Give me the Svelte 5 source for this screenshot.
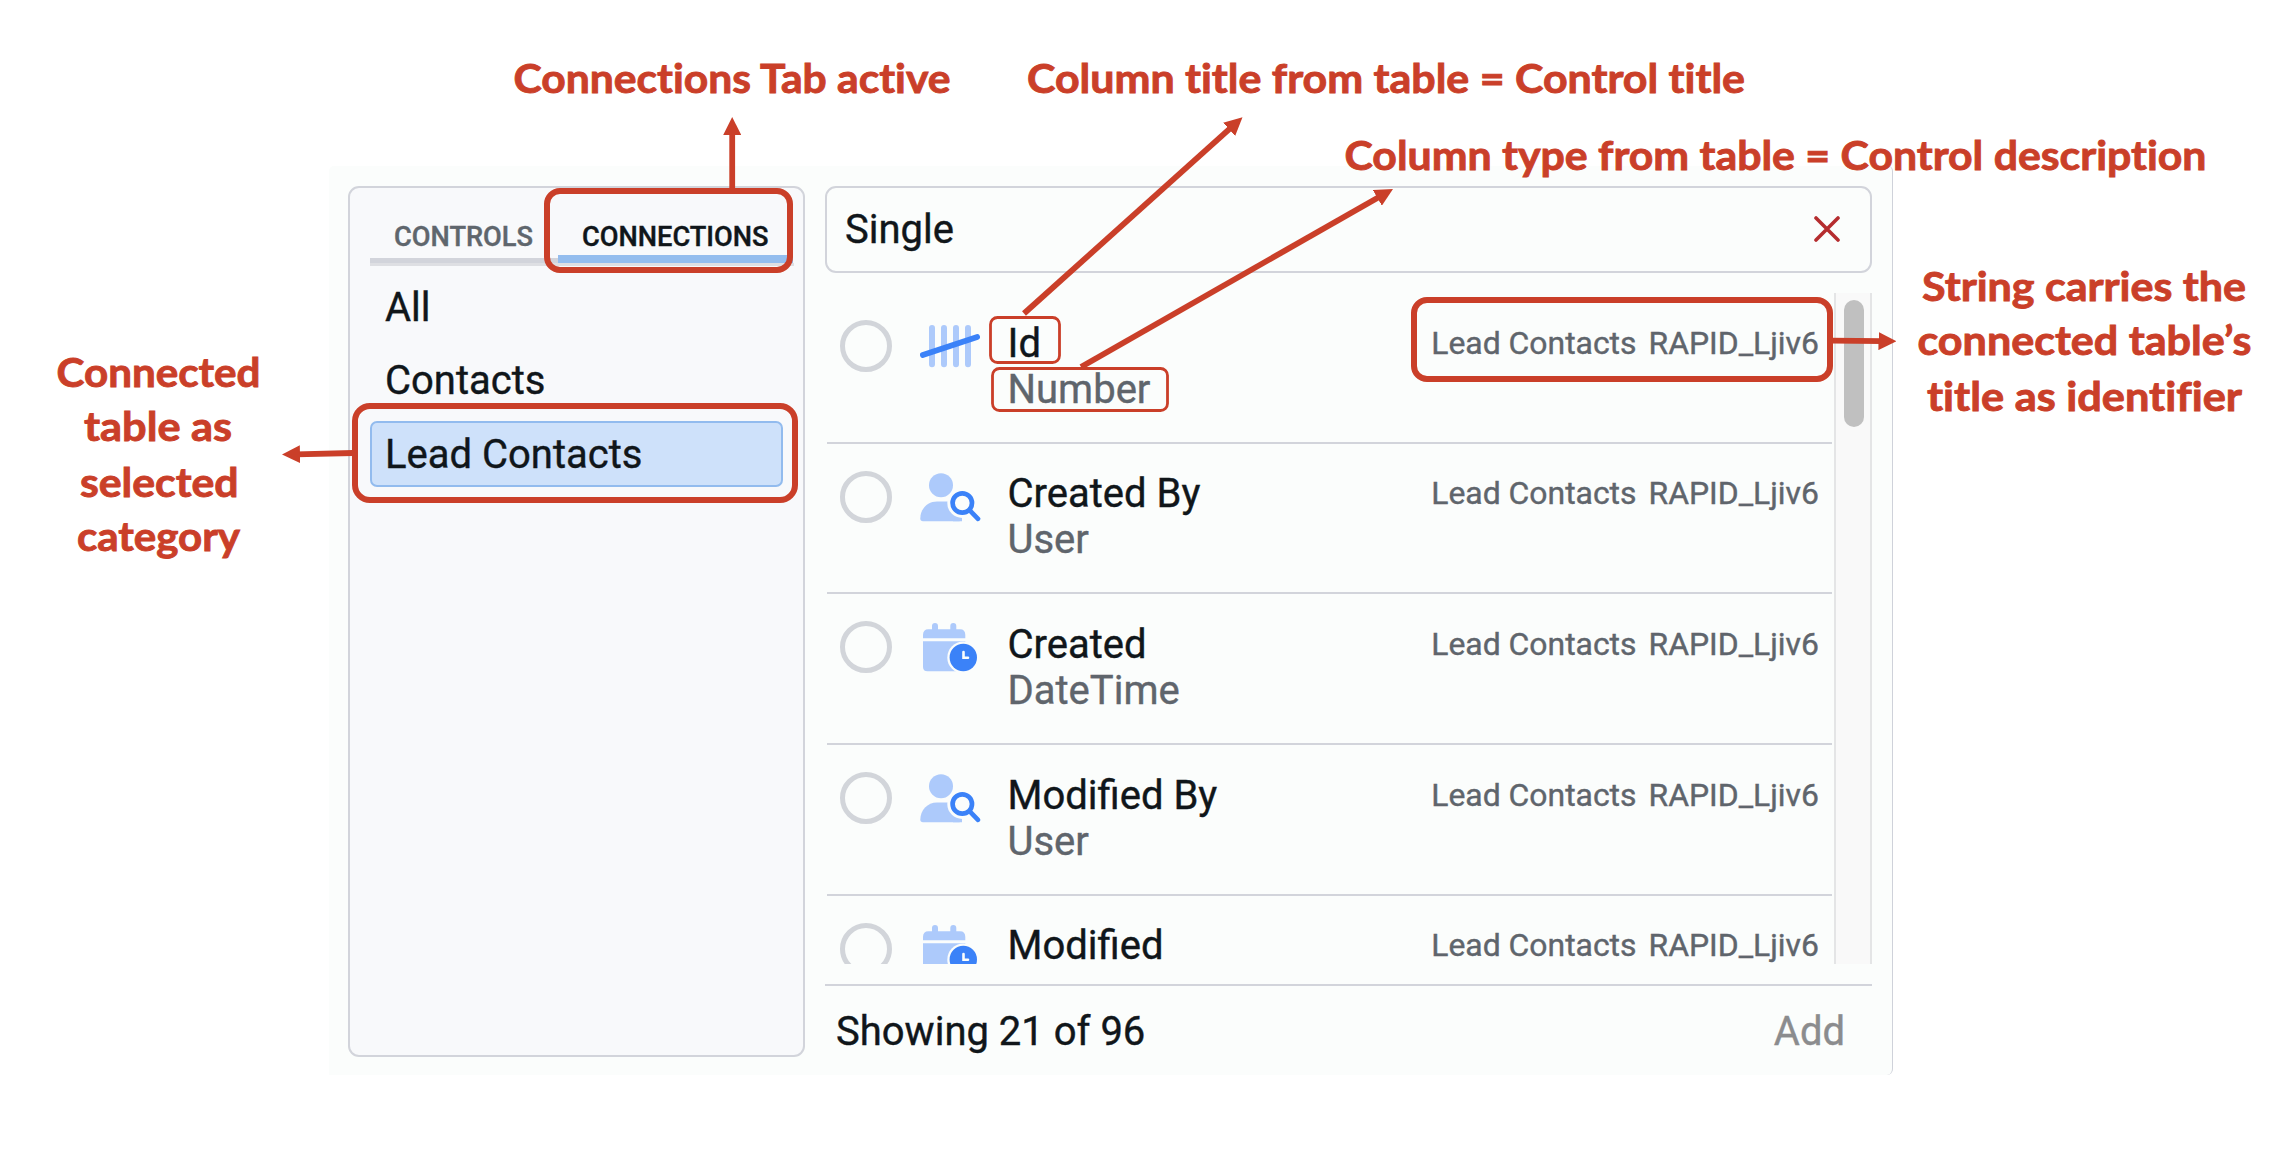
<script>
  const categories = ['All', 'Contacts', 'Lead Contacts'];
  const selected = 'Lead Contacts';

  const rows = [
    { title: 'Id', type: 'Number', icon: 'tally' },
    { title: 'Created By', type: 'User', icon: 'user' },
    { title: 'Created', type: 'DateTime', icon: 'date' },
    { title: 'Modified By', type: 'User', icon: 'user' },
    { title: 'Modified', type: '', icon: 'date' }
  ];

  // Callout labels: left edge, baseline and rendered width
  const labels = [
    { text: 'Connections Tab active', x: 513.5, y: 92.5, w: 437 },
    { text: 'Column title from table = Control title', x: 1027, y: 92.5, w: 718 },
    { text: 'Column type from table = Control description', x: 1344.5, y: 169.5, w: 862 },
    { text: 'Connected', x: 56.5, y: 387, w: 204 },
    { text: 'table as', x: 84, y: 441, w: 148 },
    { text: 'selected', x: 80, y: 496.5, w: 158.5 },
    { text: 'category', x: 77, y: 551, w: 163 },
    { text: 'String carries the', x: 1922, y: 301, w: 324 },
    { text: 'connected table’s', x: 1917.5, y: 355, w: 334 },
    { text: 'title as identifier', x: 1927, y: 411, w: 315 }
  ];

  const boxes = [
    { x: 547, y: 191, w: 243, h: 79, r: 13, s: 6 },
    { x: 355, y: 406, w: 440, h: 94, r: 15, s: 6 },
    { x: 1414, y: 300, w: 416, h: 79, r: 13, s: 6 },
    { x: 990.5, y: 317.5, w: 69, h: 45, r: 7, s: 2.8 },
    { x: 992.5, y: 368.5, w: 175, h: 42, r: 7, s: 2.8 }
  ];

  const arrows = [
    [732.2, 190, 732.2, 117],
    [1024, 313.5, 1242.5, 117.3],
    [1081, 367, 1393, 189],
    [353, 453, 282, 454.6],
    [1832, 340.6, 1896.5, 341.3]
  ];
</script>

<main>
  <div class="window">
    <aside>
      <nav>
        <span class="tab">CONTROLS</span>
        <span class="tab active">CONNECTIONS</span>
      </nav>
      <ul>
        {#each categories as c}
          <li class:selected={c === selected}>{c}</li>
        {/each}
      </ul>
    </aside>

    <section>
      <div class="search">
        <span>Single</span>
        <svg width="26" height="26" viewBox="0 0 26 26">
          <path d="M2 2L24 24M24 2L2 24" stroke="#b52d2f" stroke-width="3.6" stroke-linecap="round" />
        </svg>
      </div>

      <div class="results">
        <div class="list">
          {#each rows as row}
            <div class="row">
              <span class="radio"></span>
              <svg class="icon" width="60" height="50" viewBox="0 0 60 50">
                {#if row.icon === 'tally'}
                  <path d="M12 5V41.3M24 5V41.3M36 5V41.3M48 5V41.3" stroke="#adcafb" stroke-width="6" stroke-linecap="round" />
                  <path d="M2.8 32L57.2 14" stroke="#3b82f8" stroke-width="5.6" stroke-linecap="round" />
                {:else if row.icon === 'user'}
                  <circle cx="21" cy="11.2" r="12" fill="#adcafb" />
                  <path d="M0.3 44.500C0.300 35 7.500 27.400 17 27.400H38L42 44V47.200H3Q0.300 47.200 0.300 44.500Z" fill="#adcafb" />
                  <circle cx="42.300" cy="29" r="15" fill="#fbfdfc" />
                  <path d="M37 45.200Q40 45 42 44.500Q42 47.200 39 47.200H33V44Z" fill="#adcafb" />
                  <circle cx="42.300" cy="29" r="9.700" fill="none" stroke="#3b82f8" stroke-width="4.700" />
                  <path d="M49.500 36.200L58 44.800" stroke="#3b82f8" stroke-width="4.700" stroke-linecap="round" />
                {:else}
                  <path d="M3 14.200V11Q3 5.200 8.500 5.200H12V2A3 3 0 0 1 18 2V5.200H30.300V2A3 3 0 0 1 36.300 2V5.200H40Q45.300 5.200 45.300 11V14.200ZM3 17.200H45.300V47.200H7.500Q3 47.200 3 43Z" fill="#adcafb" />
                  <circle cx="43.300" cy="33.500" r="16" fill="#fbfdfc" />
                  <circle cx="43.300" cy="33.500" r="13.700" fill="#3b82f8" />
                  <path d="M43.500 28V33.700H48" fill="none" stroke="#fbfdfc" stroke-width="2.600" stroke-linecap="round" />
                {/if}
              </svg>
              <div class="names">
                <span>{row.title}</span>
                {#if row.type}<span class="type">{row.type}</span>{/if}
              </div>
              <div class="meta"><span>Lead Contacts</span><span>RAPID_Ljiv6</span></div>
            </div>
          {/each}
        </div>
        <div class="track"><div class="thumb"></div></div>
      </div>

      <footer>
        <span>Showing 21 of 96</span>
        <span class="add">Add</span>
      </footer>
    </section>
  </div>

  <svg class="callouts" width="2294" height="1156" viewBox="0 0 2294 1156">
    <defs>
      <marker id="head" markerUnits="userSpaceOnUse" markerWidth="18" markerHeight="18" refX="18" refY="9" orient="auto">
        <path d="M0 0L18 9L0 18Z" fill="#ca3f29" />
      </marker>
    </defs>
    {#each arrows as [x1, y1, x2, y2]}
      {@const len = Math.hypot(x2 - x1, y2 - y1)}
      <line {x1} {y1} x2={x2 - ((x2 - x1) / len) * 14} y2={y2 - ((y2 - y1) / len) * 14} stroke="#ca3f29" stroke-width="5.800" />
      <line {x1} {y1} {x2} {y2} stroke="none" marker-end="url(#head)" />
    {/each}
    {#each boxes as b}
      <rect x={b.x} y={b.y} width={b.w} height={b.h} rx={b.r} fill="none" stroke="#ca3f29" stroke-width={b.s} />
    {/each}
    {#each labels as l}
      <text x={l.x} y={l.y} textLength={l.w} lengthAdjust="spacingAndGlyphs">{l.text}</text>
    {/each}
  </svg>
</main>

<style>
  :global(body) {
    margin: 0;
    background: #fff;
  }
  main {
    position: relative;
    box-sizing: border-box;
    width: 2294px;
    height: 1156px;
    padding: 166px 0 0 329px;
    overflow: hidden;
    background: #fff;
    font-family: Roboto, 'Liberation Sans', sans-serif;
    font-size: 40px;
    color: #10161a;
    -webkit-text-stroke: 0.4px currentColor;
  }
  .window {
    box-sizing: border-box;
    width: 1564px;
    height: 909px;
    padding: 20px 20px 18px 19px;
    display: flex;
    gap: 20px;
    background: #fbfdfc;
    border-right: 1px solid #cfd2da;
    border-radius: 5px 5px 6px 0;
  }
  aside {
    box-sizing: border-box;
    width: 457px;
    height: 871px;
    flex: none;
    padding: 0 9px 0 20px;
    border: 2px solid #d2d4db;
    border-radius: 11px;
    background: #f8f9fb;
  }
  nav {
    display: flex;
    height: 78px;
    box-sizing: border-box;
    border-bottom: 3px solid #dedfe3;
  }
  .tab {
    box-sizing: border-box;
    width: 188px;
    height: 75px;
    padding: 33px 0 0 24px;
    border-bottom: 5px solid #d2d4db;
    font-size: 27.200px;
    line-height: 32px;
    font-weight: 500;
    color: #5f666d;
  }
  .tab.active {
    width: 235px;
    border-bottom: 8px solid #94bdee;
    color: #10161a;
  }
  ul {
    list-style: none;
    margin: 8px 11px 0 0;
    padding: 0;
    display: grid;
    gap: 7.400px;
  }
  li {
    box-sizing: border-box;
    height: 66px;
    padding-left: 13px;
    border: 2px solid transparent;
    border-radius: 7px;
    line-height: 63px;
  }
  li.selected {
    border-color: #92bbee;
    background: #cee1fa;
  }
  section {
    width: 1047px;
    flex: none;
    display: flex;
    flex-direction: column;
  }
  .search {
    box-sizing: border-box;
    height: 87px;
    border: 2px solid #d2d4db;
    border-radius: 11px;
    padding: 0 30px 1px 18px;
    display: flex;
    align-items: center;
    justify-content: space-between;
  }
  .results {
    height: 671px;
    margin-top: 20px;
    overflow: hidden;
    display: flex;
    justify-content: space-between;
  }
  .list {
    width: 1005px;
    margin-left: 2px;
  }
  .row {
    box-sizing: border-box;
    height: 150.670px;
    border-bottom: 2.500px solid #d2d4db;
    display: flex;
    align-items: flex-start;
  }
  .radio {
    box-sizing: border-box;
    width: 52px;
    height: 52px;
    margin: 27px 0 0 13px;
    border: 5px solid #d2d5da;
    border-radius: 50%;
  }
  .icon {
    margin: 30px 0 0 28px;
    overflow: visible;
  }
  .names {
    margin: 27.800px 0 0 27.500px;
    display: grid;
    line-height: 46px;
  }
  .type {
    color: #5f656c;
  }
  .meta {
    margin: 30.600px 13px 0 auto;
    display: flex;
    gap: 12px;
    font-size: 31.900px;
    line-height: 38px;
    color: #5f656c;
  }
  .track {
    box-sizing: border-box;
    width: 38px;
    padding: 7px 0 0 8px;
    background: #f9f9f9;
    border: solid #e4e5e6;
    border-width: 0 2px;
  }
  .thumb {
    width: 20px;
    height: 127px;
    border-radius: 10px;
    background: #c0c0c0;
  }
  footer {
    margin-top: 20px;
    border-top: 2.500px solid #d2d4db;
    padding: 22px 27px 0 11px;
    display: flex;
    justify-content: space-between;
    line-height: 48px;
  }
  .add {
    color: #8b8c8e;
  }
  .callouts {
    position: absolute;
    inset: 0;
    font-family: Lato, 'Open Sans', sans-serif;
    font-weight: 700;
    font-size: 41px;
    font-variant-ligatures: none;
    fill: #ca3f29;
    -webkit-text-stroke: 0;
  }
  .callouts text {
    stroke: #ca3f29;
    stroke-width: 0.9px;
  }
</style>
